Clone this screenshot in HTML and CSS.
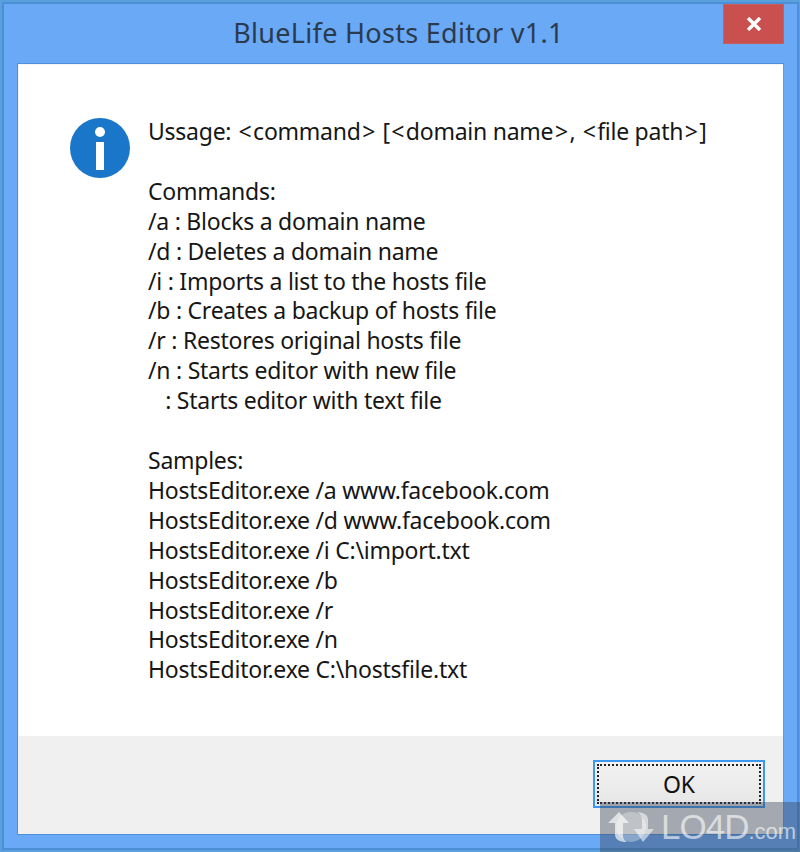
FILE: index.html
```html
<!DOCTYPE html>
<html lang="en">
<head>
<meta charset="utf-8">
<title>BlueLife Hosts Editor v1.1</title>
<link rel="stylesheet" href="styles.css">
</head>
<body>
<div class="window">
  <header class="titlebar">
    <h1 class="title">BlueLife Hosts Editor v1.1</h1>
    <button class="close" aria-label="Close">
      <svg width="16" height="14" viewBox="0 0 16 14"><path d="M2 1 L14 13 M14 1 L2 13" stroke="#fff" stroke-width="3.4" fill="none"/></svg>
    </button>
  </header>
  <main class="dialog">
    <section class="content">
      <svg class="info" width="60" height="60" viewBox="0 0 60 60">
        <circle cx="30" cy="30" r="30" fill="#1976c8"/>
        <circle cx="30" cy="14" r="5" fill="#fff"/>
        <rect x="26" y="24" width="8" height="28" fill="#fff"/>
      </svg>
      <div class="message">
        <p>Ussage: <span class="br">&lt;</span>command<span class="br">&gt;</span> [<span class="br">&lt;</span>domain name<span class="br">&gt;</span>, <span class="br">&lt;</span>file path<span class="br">&gt;</span>]</p>
        <p>&nbsp;</p>
        <p>Commands:</p>
        <p>/a : Blocks a domain name</p>
        <p>/d : Deletes a domain name</p>
        <p>/i : Imports a list to the hosts file</p>
        <p>/b : Creates a backup of hosts file</p>
        <p>/r : Restores original hosts file</p>
        <p>/n : Starts editor with new file</p>
        <p>&nbsp;&nbsp;&nbsp;: Starts editor with text file</p>
        <p>&nbsp;</p>
        <p>Samples:</p>
        <p>HostsEditor.exe /a www.facebook.com</p>
        <p>HostsEditor.exe /d www.facebook.com</p>
        <p>HostsEditor.exe /i C:\import.txt</p>
        <p>HostsEditor.exe /b</p>
        <p>HostsEditor.exe /r</p>
        <p>HostsEditor.exe /n</p>
        <p>HostsEditor.exe C:\hostsfile.txt</p>
      </div>
    </section>
    <footer class="footer">
      <button class="ok"><span class="ok-focus">OK</span></button>
    </footer>
  </main>
</div>
<div class="watermark">
  <svg width="48" height="34" viewBox="0 0 48 34">
    <circle cx="24" cy="17" r="15" fill="#fff" opacity="0.3"/>
    <path d="M12 2 L22 13 H16 V26 Q16 30 20 32 Q8 32 8 24 V13 H1 Z" fill="#fff" opacity="0.65"/>
    <path d="M36 32 L47 19 H41 V9 Q41 3 30 2 Q35 5 35 10 V19 H27 Z" fill="#fff" opacity="0.55"/>
  </svg>
  <span class="wm-text">LO4D<span class="wm-small">.com</span></span>
</div>
</body>
</html>
```
FILE: styles.css
```css
* { box-sizing: border-box; }
html, body { margin: 0; padding: 0; }
body {
  width: 800px;
  height: 852px;
  position: relative;
  overflow: hidden;
  background: #5aa0dc;
  font-family: "Noto Sans", "Open Sans", sans-serif;
  color: #111;
}
.window {
  width: 797px;
  height: 848px;
  margin-left: 2px;
  margin-top: 2px;
  background: #69a9f6;
  border: 2px solid #4c8fd6;
  display: flex;
  flex-direction: column;
}
.titlebar {
  height: 59px;
  flex: none;
  position: relative;
  display: flex;
  justify-content: center;
  align-items: flex-start;
}
.title {
  margin: 9px 4px 0 0;
  font-weight: 400;
  font-size: 27px;
  line-height: 40px;
  color: #2b3a4c;
  letter-spacing: 0.3px;
}
.close {
  position: absolute;
  top: 0;
  right: 13px;
  width: 61px;
  height: 40px;
  padding: 0;
  border: 1px solid #c5605c;
  background: #c9504f;
  display: flex;
  align-items: center;
  justify-content: center;
}
.dialog {
  width: 767px;
  height: 772px;
  margin-left: 13px;
  background: #fff;
  border: 1px solid #4f90d8;
  border-right-color: #5a9ce4;
  box-shadow: inset 1px 1px 0 #f4f4f4;
  display: flex;
  flex-direction: column;
}
.content {
  height: 672px;
  flex: none;
  padding: 54px 0 0 52px;
  display: flex;
  align-items: flex-start;
  gap: 18px;
}
.info { flex: none; }
.message {
  font-size: 23px;
  line-height: 29.9px;
  letter-spacing: -0.25px;
  color: #161616;
  margin-top: -1px;
}
.message p { margin: 0; white-space: pre; }
.br { padding: 0 1.6px; }
.footer {
  flex: 1;
  background: #f0f0f0;
  display: flex;
  justify-content: flex-end;
  align-items: flex-start;
  padding: 24px 18px 0 0;
}
.ok {
  width: 172px;
  height: 48px;
  padding: 2px;
  border: 2px solid #3c97ee;
  background: linear-gradient(#f2f2f2, #e6e6e6);
  font-family: inherit;
  color: #111;
  font-size: 23px;
}
.ok-focus {
  display: flex;
  align-items: center;
  justify-content: center;
  width: 100%;
  height: 100%;
  border: 2px dotted #222;
}
.watermark {
  position: absolute;
  left: 600px;
  top: 802px;
  width: 200px;
  height: 50px;
  background: rgba(60, 72, 90, 0.42);
  display: flex;
  align-items: center;
  padding-left: 7px;
  gap: 6px;
}
.wm-text {
  color: rgba(255, 255, 255, 0.6);
  font-family: "Liberation Sans", sans-serif;
  font-size: 35px;
  letter-spacing: -1px;
}
.wm-small { font-size: 22px; letter-spacing: 0; }
```
